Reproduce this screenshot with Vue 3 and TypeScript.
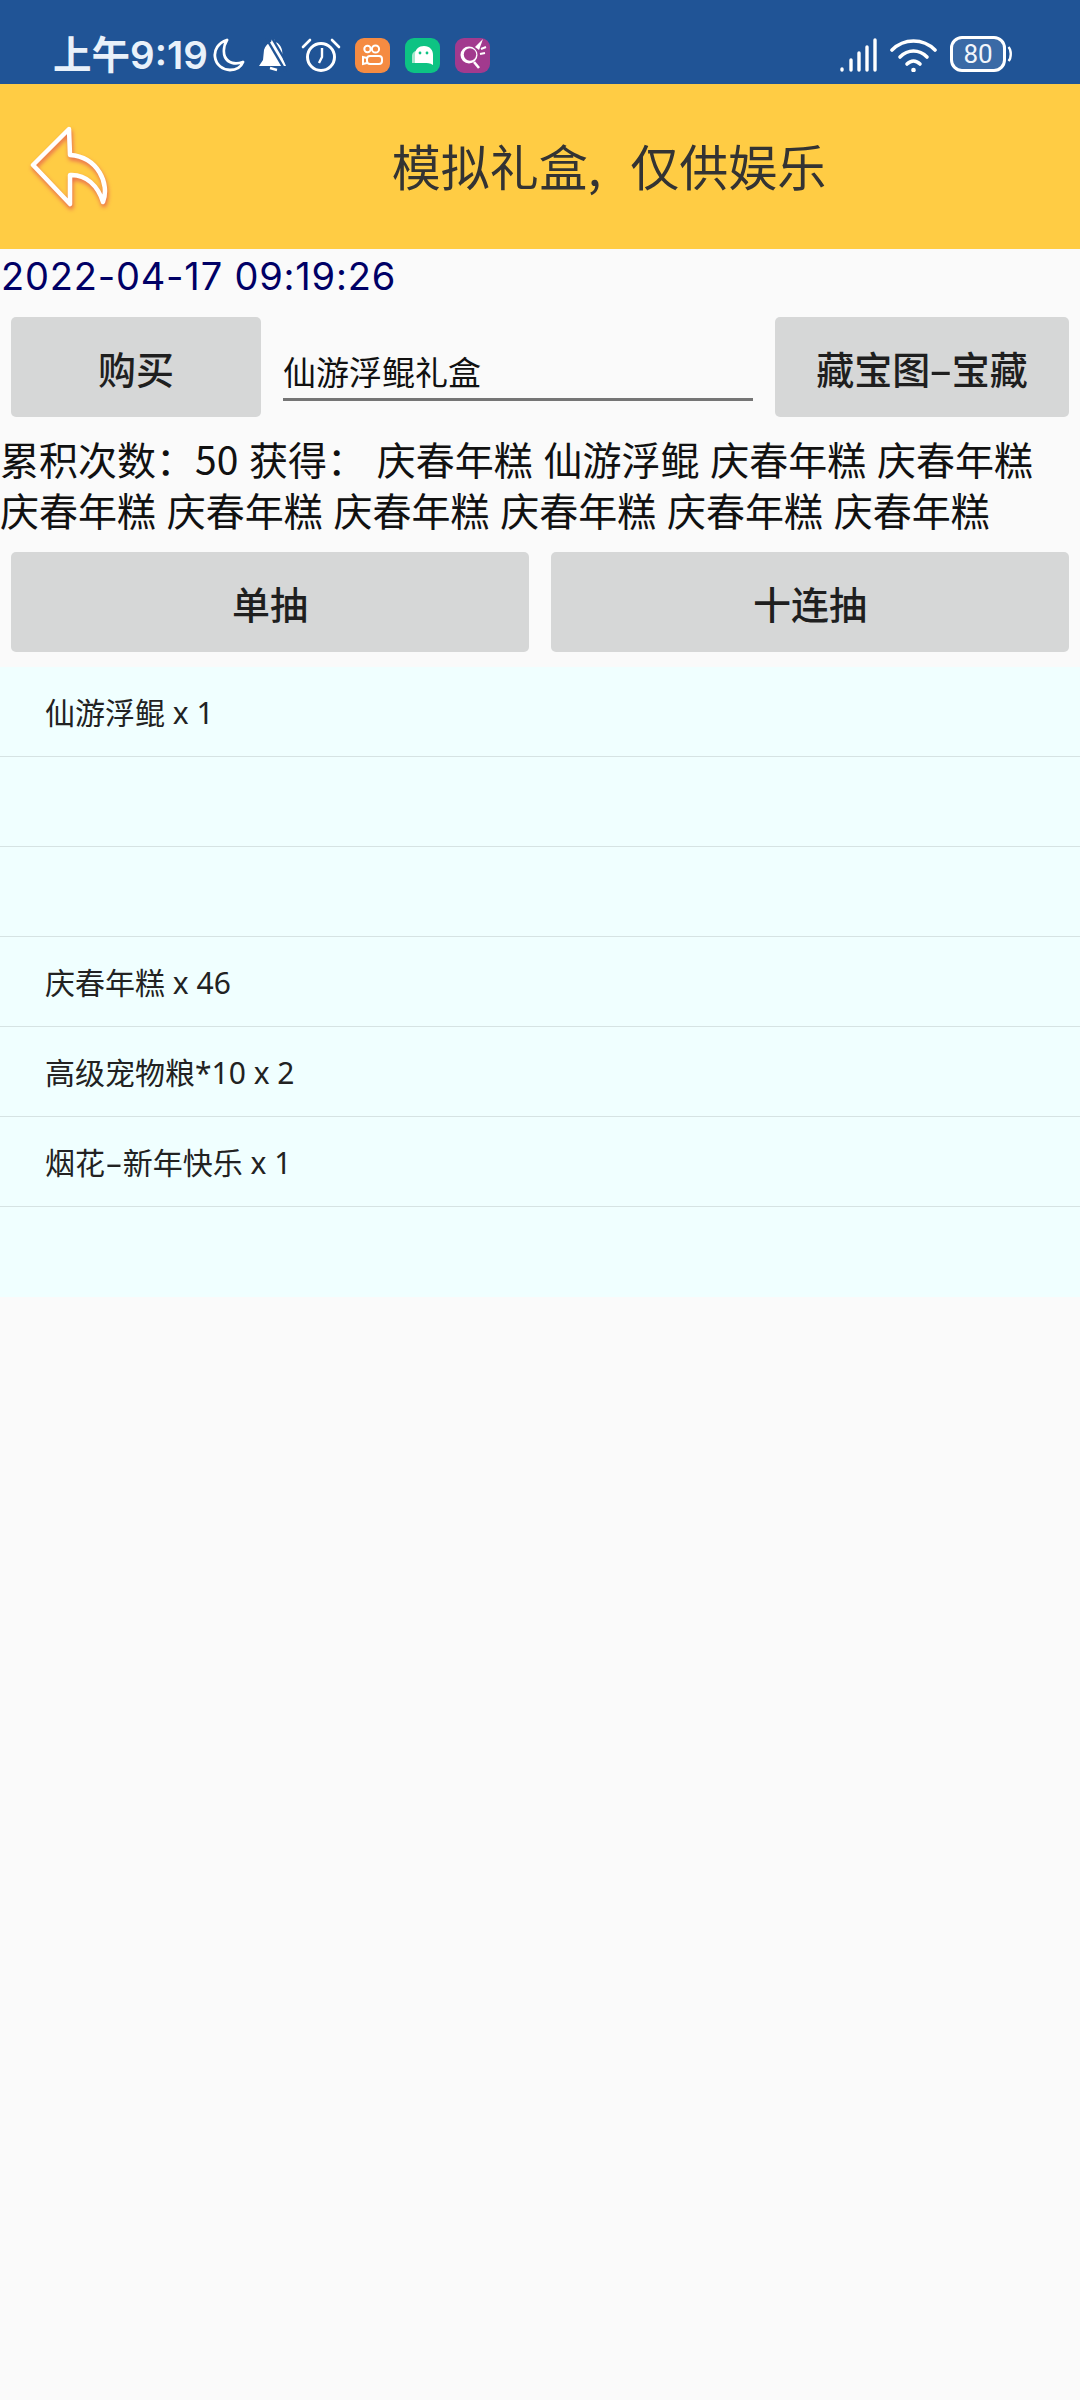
<script setup lang="ts">
const drawn: string[] = [
  "庆春年糕", "仙游浮鲲", "庆春年糕", "庆春年糕", "庆春年糕",
  "庆春年糕", "庆春年糕", "庆春年糕", "庆春年糕", "庆春年糕",
];

// full-width colons, as on the device
const summary = `累积次数\uFF1A50 获得\uFF1A ${drawn.join(" ")}`;

const rows: string[] = [
  "仙游浮鲲 x 1",
  "",
  "",
  "庆春年糕 x 46",
  "高级宠物粮*10 x 2",
  "烟花-新年快乐 x 1",
  "",
];
</script>

<template>
  <div class="page">
    <div class="status">
      <span class="clock">上午9:19</span>
      <svg class="moon" width="32" height="34" viewBox="0 0 32 34">
        <path d="M14 2 C5 5 1 12 2 19 C3 27 10 32 17 32 C23 32 28 29 30 24 C22 27 15 25 12 19 C10 14 11 7 14 2 Z" fill="none" stroke="#fff" stroke-width="2.8" stroke-linejoin="round" />
      </svg>
      <svg class="bell" width="28" height="34" viewBox="0 0 28 34">
        <path d="M0 28 L4 22 L5 12 C6 8 9 5 12 4 L13 1 L15 1 L16 4 C20 5 22 8 23 12 L24 21 L27 28 Z" fill="#fff" />
        <path d="M11 30 L18 32" stroke="#fff" stroke-width="2.4" />
        <path d="M7 0 L27 34" stroke="#205496" stroke-width="2.4" />
        <path d="M13 0 L33 34" stroke="#205496" stroke-width="2.4" />
      </svg>
      <svg class="alarm" width="40" height="34" viewBox="0 0 40 34">
        <circle cx="20" cy="19" r="13.5" fill="none" stroke="#fff" stroke-width="3" />
        <path d="M21 10 L21 19 L18 25" fill="none" stroke="#fff" stroke-width="2.4" />
        <path d="M2 9 L9 2 M31 2 L38 9" stroke="#fff" stroke-width="2.6" stroke-linecap="round" />
      </svg>
      <svg class="app first" width="35" height="35" viewBox="0 0 35 35">
        <rect width="35" height="35" rx="9" fill="#F58B42" />
        <circle cx="12.5" cy="11" r="3.2" fill="none" stroke="#fff" stroke-width="2" />
        <circle cx="20.5" cy="11" r="3.6" fill="none" stroke="#fff" stroke-width="2" />
        <rect x="12" y="18" width="15" height="8" rx="3" fill="none" stroke="#fff" stroke-width="2" />
        <path d="M12 20 L8 19 L8 26 L12 25" fill="none" stroke="#fff" stroke-width="2" />
      </svg>
      <svg class="app" width="35" height="35" viewBox="0 0 35 35">
        <rect width="35" height="35" rx="9" fill="#0DC383" />
        <path d="M7 18 C7 15 9 13 12 13 L12 25 L7 25 Z" fill="#A8E8CE" />
        <path d="M10 17 C10 11 14 8 19 8 C25 8 28 12 28 17 C28 21 28 24 28 27 C25 25 22 25 20 25 L10 25 Z" fill="#fff" />
        <circle cx="15" cy="15" r="1.4" fill="#0DC383" />
        <circle cx="22" cy="15" r="1.4" fill="#0DC383" />
      </svg>
      <svg class="app" width="35" height="35" viewBox="0 0 35 35">
        <rect width="35" height="35" rx="9" fill="#A23A8E" />
        <circle cx="14" cy="17" r="8.5" fill="#fff" />
        <circle cx="15" cy="16.5" r="6.2" fill="#A23A8E" />
        <path d="M19 24 L24 30" stroke="#fff" stroke-width="2.6" />
        <path d="M20 9 L28 1 L24 12 Z" fill="#fff" />
        <path d="M26 11 L31 9 M25 16 L30 15" stroke="#fff" stroke-width="2" />
      </svg>
      <span class="spacer"></span>
      <svg class="signal" width="37" height="34" viewBox="0 0 37 34">
        <g stroke="#fff" stroke-width="3.4" stroke-linecap="round">
          <path d="M2 31 L2 32" />
          <path d="M11 22 L11 32" />
          <path d="M19 15 L19 32" />
          <path d="M27 9 L27 32" />
          <path d="M35 2 L35 32" />
        </g>
      </svg>
      <svg class="wifi" width="47" height="34" viewBox="0 0 47 34">
        <g fill="none" stroke="#fff" stroke-width="3.6" stroke-linecap="round">
          <path d="M2 12 C14 0 33 0 45 12" />
          <path d="M10 19 C18 11 29 11 37 19" />
          <path d="M17 26 C21 22 26 22 30 26" />
        </g>
        <circle cx="23.5" cy="32" r="2.3" fill="#fff" />
      </svg>
      <div class="battery">
        <div class="battery-body">80</div>
        <svg width="6" height="16" viewBox="0 0 6 16">
          <path d="M1.5 1 C4.5 4 4.5 12 1.5 15" fill="none" stroke="#fff" stroke-width="2.4" />
        </svg>
      </div>
    </div>

    <header class="header">
      <div class="back">
        <svg width="84" height="86" viewBox="0 0 84 86">
          <path class="back-line" d="M41 5 L5 41 L42 80 L42 51 C58 50 70 62 75 78 C82 60 70 33 42 31 Z" />
        </svg>
      </div>
      <h1 class="title">模拟礼盒, 仅供娱乐</h1>
    </header>

    <div class="date">2022-04-17 09:19:26</div>

    <div class="buy-row">
      <button class="btn buy">购买</button>
      <div class="field"><span>仙游浮鲲礼盒</span></div>
      <button class="btn map">藏宝图<span class="dash">-</span>宝藏</button>
    </div>

    <p class="result">{{ summary }}</p>

    <div class="draw-row">
      <button class="btn">单抽</button>
      <button class="btn">十连抽</button>
    </div>

    <ul class="list">
      <li v-for="(row, i) in rows" :key="i">
        <template v-for="(part, j) in row.split('-')" :key="j"><span v-if="j" class="dash">-</span>{{ part }}</template>
      </li>
    </ul>
  </div>
</template>

<style scoped>
.page {
  width: 1080px;
  height: 2400px;
  background: #fafafa;
  font-family: "Noto Sans CJK SC", Roboto, sans-serif;
  overflow: hidden;
}

.status {
  height: 84px;
  box-sizing: border-box;
  background: #205496;
  padding: 36px 67px 0 53px;
  display: flex;
  align-items: flex-start;
  color: #fff;
}

.clock {
  font-family: Inter, "Noto Sans CJK SC", sans-serif;
  font-size: 38.5px;
  font-weight: 600;
  line-height: 38px;
  color: #e9f1fa;
  width: 160px;
  white-space: nowrap;
}

.moon {
  margin-top: 2px;
}

.bell {
  margin: 2px 0 0 14px;
}

.alarm {
  margin: 2px 0 0 14px;
}

.app {
  margin: 2px 0 0 15px;
}

.app.first {
  margin-left: 14px;
}

.spacer {
  flex: 1;
}

.signal {
  margin-top: 2px;
}

.wifi {
  margin: 2px 0 0 13px;
}

.battery {
  margin-left: 13px;
  display: flex;
  align-items: center;
  gap: 1px;
}

.battery-body {
  width: 56px;
  height: 36px;
  box-sizing: border-box;
  border: 3px solid #fff;
  border-radius: 12px;
  background: #3a6aa6;
  font-family: Roboto, sans-serif;
  font-size: 26px;
  line-height: 30px;
  text-align: center;
  color: #f2f6fb;
}

.header {
  height: 165px;
  background: #ffcc44;
  display: flex;
  align-items: center;
}

.back {
  width: 138px;
  box-sizing: border-box;
  padding-left: 28px;
  display: flex;
}

.back svg {
  overflow: visible;
  filter: drop-shadow(1px 3px 2px #e8674f);
}

.back-line {
  fill: none;
  stroke: #fff;
  stroke-width: 4.5;
  stroke-linejoin: round;
}

.title {
  flex: 1;
  margin: 0 0 4px;
  text-align: center;
  font-size: 49px;
  font-weight: 400;
  word-spacing: 18px;
  color: #333;
}

.date {
  font-family: Inter, sans-serif;
  font-size: 38px;
  line-height: 52px;
  letter-spacing: 0.8px;
  color: #000066;
  padding-left: 1px;
  margin-top: 1px;
}

.buy-row {
  display: flex;
  align-items: stretch;
  padding: 15px 11px 0;
}

.btn {
  height: 100px;
  border: none;
  border-radius: 5px;
  background: #d6d7d7;
  color: #1f1f1f;
  font-family: "Noto Sans CJK SC", sans-serif;
  font-size: 38px;
  font-weight: 500;
  padding: 0;
}

.buy {
  width: 250px;
}

.map {
  width: 294px;
}

.dash {
  display: inline-block;
  margin: 0 4px;
  transform: scaleX(1.8);
}

.field {
  flex: 1;
  margin: 0 22px;
  height: 84px;
  box-sizing: border-box;
  border-bottom: 3px solid #757575;
  font-size: 33px;
  color: #111;
  display: flex;
  align-items: flex-end;
}

.field span {
  line-height: 48px;
  padding-bottom: 3px;
}

.result {
  margin: 0;
  padding-top: 16px;
  font-size: 39px;
  line-height: 51px;
  word-spacing: 2px;
  word-break: keep-all;
  color: #111;
}

.draw-row {
  display: flex;
  gap: 22px;
  padding: 17px 11px 0;
}

.draw-row .btn {
  flex: 1;
}

.list {
  list-style: none;
  margin: 15px 0 0;
  padding: 0;
  background: #f0ffff;
}

.list li {
  height: 90px;
  box-sizing: border-box;
  border-bottom: 1px solid #d6e3e3;
  padding-left: 45px;
  font-family: "Noto Sans", "Noto Sans CJK SC", sans-serif;
  font-size: 30px;
  line-height: 91px;
  color: #222;
}

.list li:last-child {
  border-bottom: none;
}
</style>
